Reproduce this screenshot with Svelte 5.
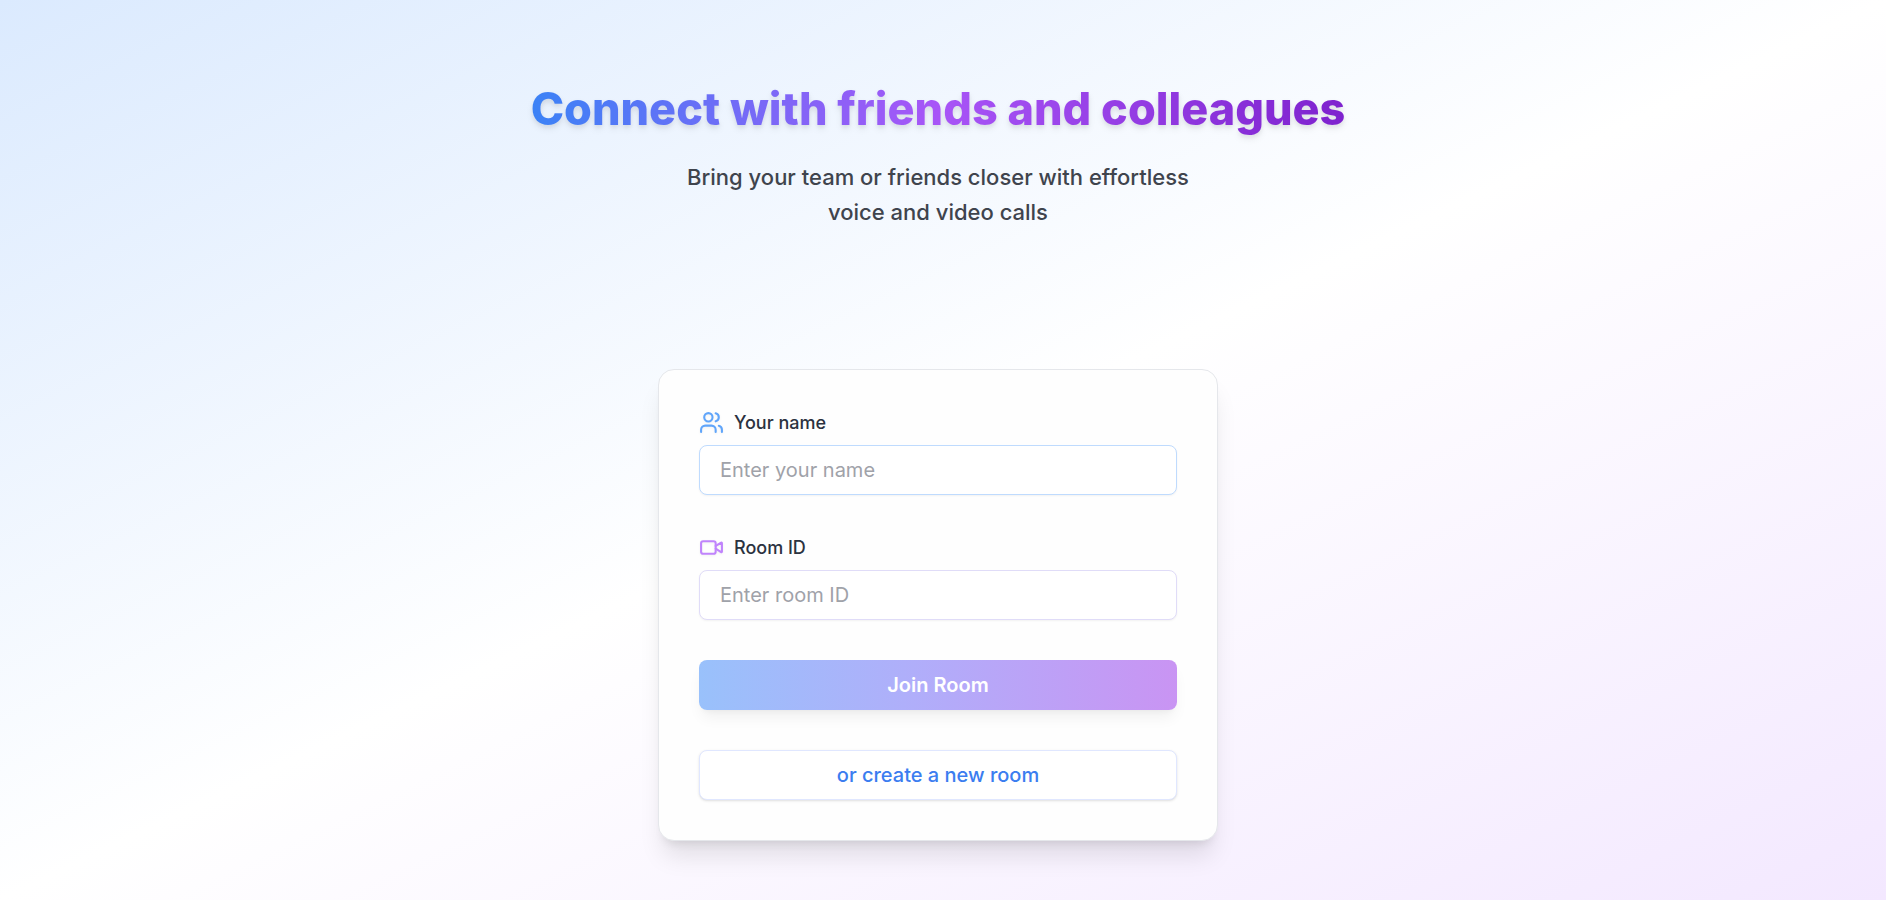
<script>
  let name = $state('');
  let room = $state('');
</script>

<main class="page">
  <header class="hero">
    <h1>Connect with friends and colleagues</h1>
    <p>Bring your team or friends closer with effortless voice and video calls</p>
  </header>

  <form class="card" onsubmit={(e) => e.preventDefault()}>
    <div class="field">
      <label for="name">
        <svg class="users" viewBox="0 0 24 24" aria-hidden="true">
          <path d="M16 21v-2a4 4 0 0 0-4-4H6a4 4 0 0 0-4 4v2" />
          <circle cx="9" cy="7" r="4" />
          <path d="M22 21v-2a4 4 0 0 0-3-3.87" />
          <path d="M16 3.13a4 4 0 0 1 0 7.75" />
        </svg>
        Your name
      </label>
      <input id="name" type="text" placeholder="Enter your name" bind:value={name} />
    </div>

    <div class="field">
      <label for="room">
        <svg class="video" viewBox="0 0 24 24" aria-hidden="true">
          <path d="m16 13 5.223 3.482a.5.5 0 0 0 .777-.416V7.87a.5.5 0 0 0-.752-.432L16 10.5" />
          <rect x="2" y="6" width="14" height="12" rx="2" />
        </svg>
        Room ID
      </label>
      <input id="room" class="purple" type="text" placeholder="Enter room ID" bind:value={room} />
    </div>

    <button class="join" type="submit">Join Room</button>
    <button class="create" type="button">or create a new room</button>
  </form>
</main>

<style>
  :global(body) {
    margin: 0;
  }
  .page {
    box-sizing: border-box;
    min-height: 100vh;
    padding: 80px 26px 40px 16px;
    display: flex;
    flex-direction: column;
    align-items: center;
    gap: 139px;
    font-family: Inter, 'Liberation Sans', sans-serif;
    background: linear-gradient(to bottom right, #dbeafe, #ffffff 50%, #f3e8ff);
  }
  .hero {
    display: flex;
    flex-direction: column;
    align-items: center;
    gap: 22px;
    text-align: center;
  }
  h1 {
    margin: 0;
    font-size: 45px;
    line-height: 58px;
    font-weight: 800;
    color: transparent;
    background: linear-gradient(to right, #3b82f6, #a855f7, #7e22ce);
    background-clip: text;
    -webkit-background-clip: text;
    filter: drop-shadow(0 4px 3px rgb(0 0 0 / 0.07)) drop-shadow(0 2px 2px rgb(0 0 0 / 0.06));
  }
  p {
    margin: 0;
    max-width: 540px;
    font-size: 22px;
    line-height: 35px;
    font-weight: 500;
    color: #3f444d;
  }
  .card {
    box-sizing: border-box;
    width: 100%;
    max-width: 560px;
    padding: 40px;
    display: flex;
    flex-direction: column;
    gap: 40px;
    background: #fefefe;
    border: 1px solid #e5e7eb;
    border-radius: 16px;
    box-shadow: 0 20px 25px -5px rgb(0 0 0 / 0.1), 0 8px 10px -6px rgb(0 0 0 / 0.1);
  }
  .field {
    display: flex;
    flex-direction: column;
    gap: 10px;
  }
  label {
    display: flex;
    align-items: center;
    gap: 10px;
    font-size: 18px;
    line-height: 25px;
    font-weight: 500;
    color: #2b3240;
  }
  svg {
    width: 25px;
    height: 25px;
    fill: none;
    stroke-width: 2;
    stroke-linecap: round;
    stroke-linejoin: round;
    filter: drop-shadow(0 1px 1px rgb(0 0 0 / 0.05));
  }
  .users {
    stroke: #60a5fa;
  }
  .video {
    stroke: #c084fc;
  }
  input,
  button {
    box-sizing: border-box;
    width: 100%;
    height: 50px;
    border-radius: 8px;
    font-family: inherit;
    font-size: 20px;
    line-height: 28px;
  }
  input {
    padding: 0 20px;
    color: #1f2937;
    background: #ffffff;
    border: 1px solid #bfdbfe;
    box-shadow: 0 1px 2px rgb(0 0 0 / 0.05);
  }
  input.purple {
    border-color: #e0dcf8;
  }
  input::placeholder {
    color: #9fa2a9;
    opacity: 1;
  }
  button {
    cursor: pointer;
  }
  .join {
    border: 0;
    font-weight: 600;
    color: #ffffff;
    background: linear-gradient(to right, #99c1fb, #b0aefa 45%, #c994f3);
    box-shadow: 0 10px 15px -3px rgb(0 0 0 / 0.06), 0 4px 6px -4px rgb(0 0 0 / 0.06);
  }
  .create {
    font-weight: 500;
    color: #3b7df0;
    background: #ffffff;
    border: 1px solid #e0e7ff;
    box-shadow: 0 1px 3px rgb(0 0 0 / 0.1), 0 1px 2px -1px rgb(0 0 0 / 0.1);
  }
</style>
